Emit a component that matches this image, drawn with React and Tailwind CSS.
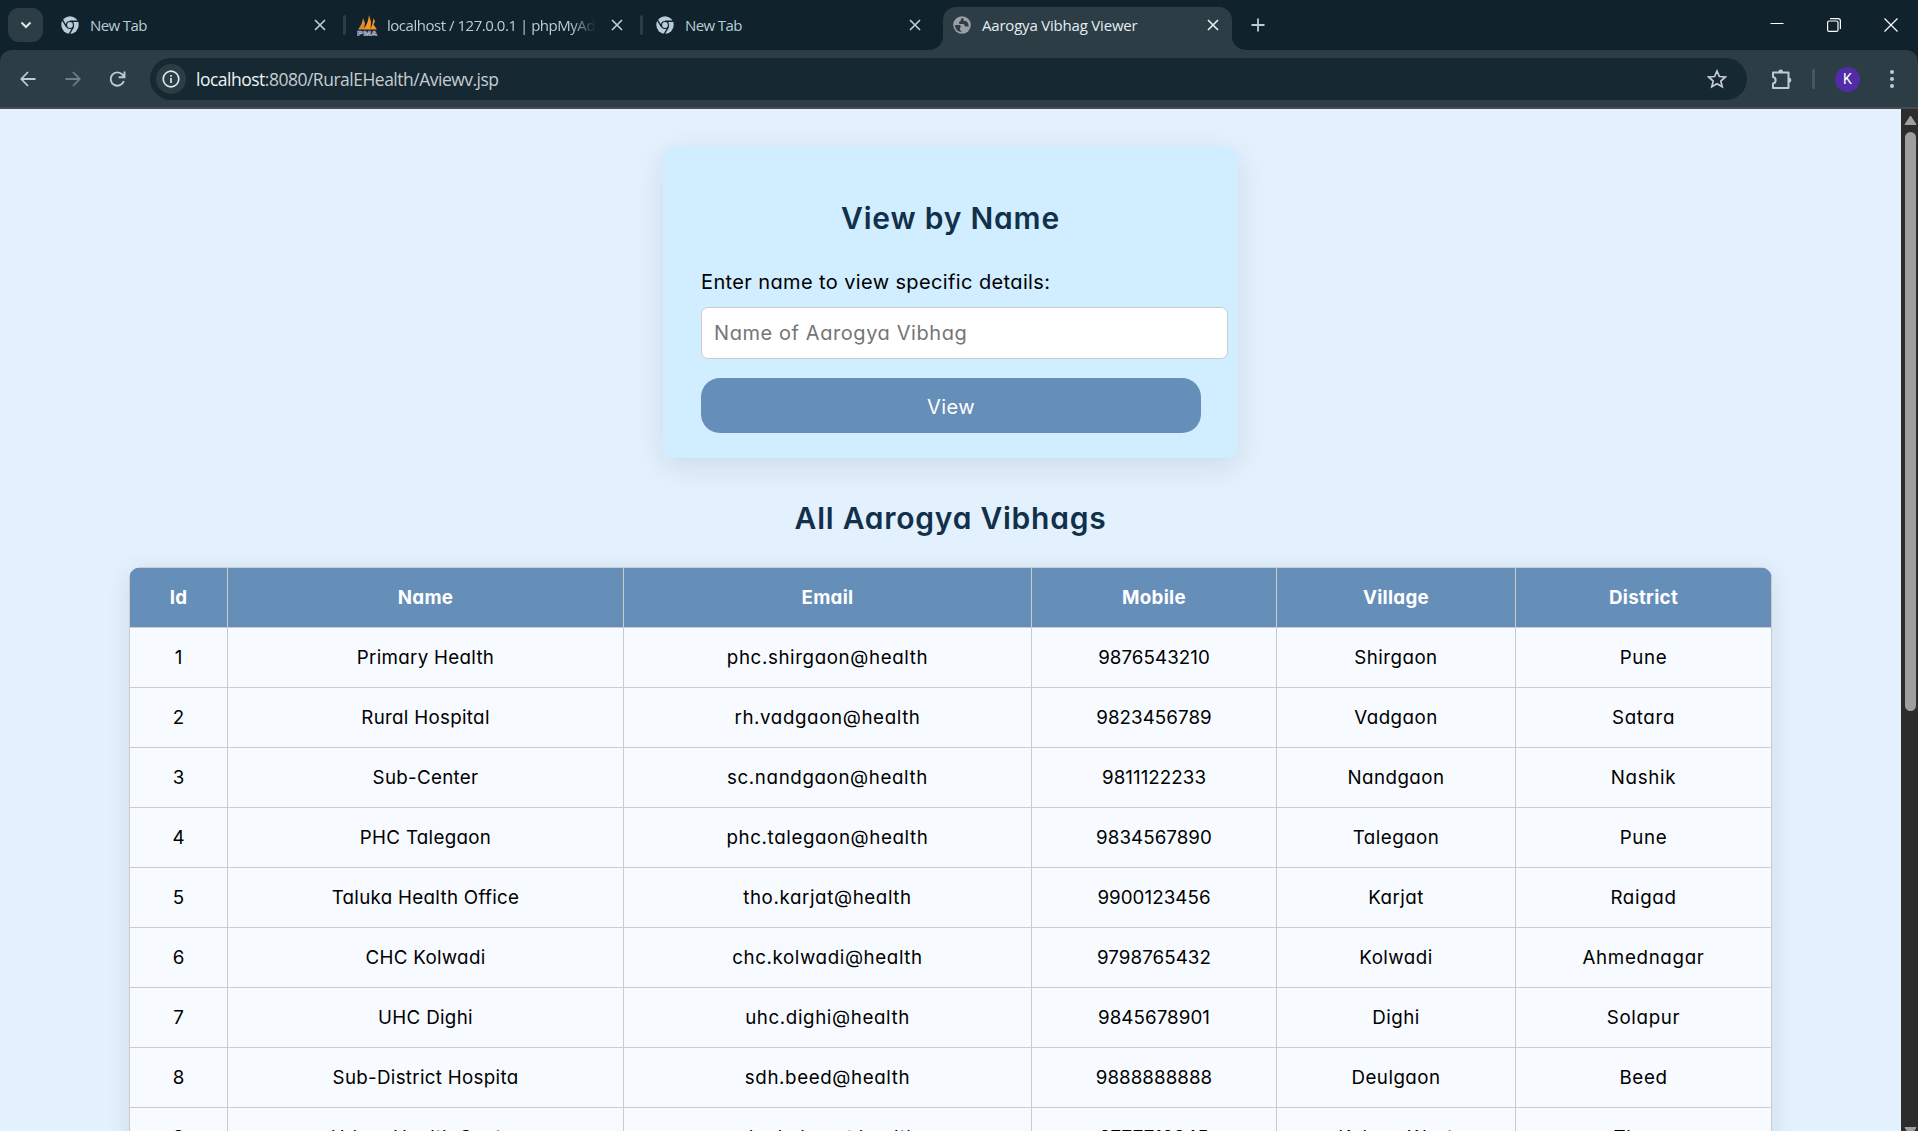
const POP = "font-['Inter','Liberation_Sans',sans-serif] [font-feature-settings:'cv11']";
const SEG = "font-['Open_Sans','Noto_Sans',sans-serif]";

const rows = [
  ["1", "Primary Health", "phc.shirgaon@health", "9876543210", "Shirgaon", "Pune"],
  ["2", "Rural Hospital", "rh.vadgaon@health", "9823456789", "Vadgaon", "Satara"],
  ["3", "Sub-Center", "sc.nandgaon@health", "9811122233", "Nandgaon", "Nashik"],
  ["4", "PHC Talegaon", "phc.talegaon@health", "9834567890", "Talegaon", "Pune"],
  ["5", "Taluka Health Office", "tho.karjat@health", "9900123456", "Karjat", "Raigad"],
  ["6", "CHC Kolwadi", "chc.kolwadi@health", "9798765432", "Kolwadi", "Ahmednagar"],
  ["7", "UHC Dighi", "uhc.dighi@health", "9845678901", "Dighi", "Solapur"],
  ["8", "Sub-District Hospita", "sdh.beed@health", "9888888888", "Deulgaon", "Beed"],
  ["9", "Urban Health Center", "uhc.kalyan@health", "9777712345", "Kalyan West", "Thane"],
];
const heads = ["Id", "Name", "Email", "Mobile", "Village", "District"];
const tracking = [
  "tracking-normal",
  "tracking-[0.3px]",
  "tracking-[0.6px]",
  "tracking-[0.05px]",
  "tracking-[0.45px]",
  "tracking-[0.65px]",
];

function ChromeIcon() {
  return (
    <svg width="18" height="18" viewBox="0 0 18 18" className="shrink-0">
      <circle cx="9" cy="9" r="8.7" fill="#b7cdd8" />
      <g stroke="#10222b" strokeWidth="1.4" fill="none">
        <circle cx="9" cy="9" r="4.1" fill="#10222b" stroke="none" />
        <path d="M9 5.2H17.2M5.6 10.8L1.4 3.8M12.4 10.8L8.3 18" />
      </g>
      <circle cx="9" cy="9" r="2.9" fill="#b7cdd8" />
    </svg>
  );
}

function PmaIcon() {
  return (
    <svg width="21" height="21" viewBox="0 0 21 21" className="shrink-0">
      <path d="M1 14.500C4 11 5.500 7 6 3L8 8L7 14.500Z" fill="#d98a35" />
      <path d="M6.500 14.500C10 10 11.500 5 12 0L14 7L13.500 14.500Z" fill="#f8981d" />
      <path d="M13 14.500C15 11 16 7 16.500 3L18 6.500L16.500 9.500L20 14.500Z" fill="#ec9430" />
      <text x="0" y="20.500" fontSize="8" fontWeight="700" textLength="20.500" lengthAdjust="spacingAndGlyphs" fill="#3a3a66" stroke="#b9bdd6" strokeWidth=".6" fontFamily="Liberation Sans">PMA</text>
    </svg>
  );
}

function GlobeIcon() {
  return (
    <svg width="18" height="18" viewBox="0 0 18 18" className="shrink-0">
      <circle cx="9" cy="9" r="8.8" fill="#9aa0a6" />
      <path d="M9.500 2C7.500 2.500 8.500 4.500 7 5.500C5 6 6 8 7.500 8H10C12 8 11 10 12.500 10.500H15.800C15.500 6 13 4.500 11.500 5C10 5 11.500 3 9.500 2ZM2 9H5.500C8 9 8.500 11 7 12C6.500 13 7.500 15 9 16C4.500 16 2 13 2 9Z" fill="#2c3d46" />
    </svg>
  );
}

function Cross({ color }) {
  return (
    <svg width="12" height="12" viewBox="0 0 12 12" className="shrink-0" stroke={color} strokeWidth="1.700" fill="none">
      <path d="M1 1L11 11M11 1L1 11" />
    </svg>
  );
}

function TabStrip() {
  return (
    <div className={`flex h-[50px] bg-[#10222b] text-[15px] text-[#b7cdd8] ${SEG}`}>
      <div className="mt-2 ml-2 flex h-[34px] w-[35px] shrink-0 items-center justify-center rounded-[11px] bg-[#2c3d46]">
        <svg width="12" height="8" viewBox="0 0 12 8" fill="none" stroke="#dfe9ee" strokeWidth="2"><path d="M1.500 1.500L6 6L10.500 1.500" /></svg>
      </div>
      <div className="flex h-[50px] w-[303px] shrink-0 items-center pl-[18px]">
        <ChromeIcon />
        <span className="ml-[11px] flex-1 whitespace-nowrap tracking-[-0.6px]">New Tab</span>
        <Cross color="#b7cdd8" />
        <span className="ml-[17px] h-5 w-[3px] rounded bg-[#2c3d46]" />
      </div>
      <div className="flex h-[50px] w-[297px] shrink-0 items-center pl-[11px]">
        <PmaIcon />
        <span className="ml-[9px] w-[209px] overflow-hidden whitespace-nowrap tracking-[-0.47px] [mask-image:linear-gradient(to_right,black_88%,transparent)]">localhost / 127.0.0.1 | phpMyAdmin</span>
        <span className="flex-1" />
        <Cross color="#b7cdd8" />
        <span className="ml-[17px] h-5 w-[3px] rounded bg-[#2c3d46]" />
      </div>
      <div className="flex h-[50px] w-[285px] shrink-0 items-center pl-[13px]">
        <ChromeIcon />
        <span className="ml-[11px] flex-1 whitespace-nowrap tracking-[-0.6px]">New Tab</span>
        <Cross color="#b7cdd8" />
        <span className="w-[7px]" />
      </div>
      <svg width="15" height="50" viewBox="0 0 15 50" className="shrink-0"><path d="M0 50C9 50 15 44 15 36V50Z" fill="#2c3d46" /></svg>
      <div className="mt-[7px] flex h-[43px] w-[289px] shrink-0 items-center rounded-t-[13px] bg-[#2c3d46] pr-[13px] pb-[7px] pl-[10px] text-[#e4edf1]">
        <GlobeIcon />
        <span className="ml-[11px] flex-1 whitespace-nowrap tracking-[-0.2px]">Aarogya Vibhag Viewer</span>
        <Cross color="#e4edf1" />
      </div>
      <svg width="15" height="50" viewBox="0 0 15 50" className="shrink-0"><path d="M15 50C6 50 0 44 0 36V50Z" fill="#2c3d46" /></svg>
      <div className="flex h-[50px] flex-1 items-center pl-1">
        <svg width="14" height="14" viewBox="0 0 14 14" stroke="#b7cdd8" strokeWidth="1.800"><path d="M7 .5V13.500M.5 7H13.500" /></svg>
      </div>
      <div className="flex h-[49px] items-center gap-[43px] pr-5">
        <svg width="14" height="14" viewBox="0 0 14 14" stroke="#fff" className="-mt-[3px]"><path d="M.5 7.500H13.500" /></svg>
        <svg width="14" height="14" viewBox="0 0 14 14" stroke="#fff" fill="none" strokeWidth="1.200"><rect x=".6" y="3" width="10.400" height="10.400" rx="1.500" /><path d="M3 .7H11Q13.400 .7 13.400 3V11" /></svg>
        <svg width="14" height="14" viewBox="0 0 14 14" stroke="#fff" strokeWidth="1.200"><path d="M.5 .5L13.500 13.500M13.500 .5L.5 13.500" /></svg>
      </div>
    </div>
  );
}

function Toolbar() {
  return (
    <div className="bg-[#10222b]">
      <div className={`flex h-[59px] items-start rounded-t-[12px] border-b-2 border-[#4b484d] bg-[#2c3d46] pt-2 ${SEG}`}>
        <div className="flex h-[42px] w-[150px] shrink-0 items-center pl-5">
          <svg width="16" height="16" viewBox="0 0 16 16" fill="none" stroke="#b7cdd8" strokeWidth="1.800"><path d="M15.500 8H1.500M8 1L1.300 8L8 15" /></svg>
          <svg width="16" height="16" viewBox="0 0 16 16" fill="none" stroke="#6d7f89" strokeWidth="1.800" className="ml-[29px]"><path d="M.5 8H14.500M8 1L14.700 8L8 15" /></svg>
          <svg width="17" height="17" viewBox="0 0 17 17" fill="none" stroke="#b7cdd8" strokeWidth="1.900" className="ml-[28px]"><path d="M14.800 10A6.700 6.700 0 1 1 13.500 3.700L15.500 5.800M15.500 .5V6.300H9.700" /></svg>
        </div>
        <div className="flex h-[42px] w-[1597px] shrink-0 items-center rounded-full bg-[#162831] pl-[6px]">
          <div className="flex h-[30px] w-[30px] items-center justify-center rounded-full bg-[#2c3d46]">
            <svg width="18" height="18" viewBox="0 0 18 18" fill="none" stroke="#e0e8ec" strokeWidth="1.700"><circle cx="9" cy="9" r="7.800" /><path d="M9 8V13M9 5V6.700" /></svg>
          </div>
          <span className="ml-[10px] flex-1 pt-px text-[17.5px] tracking-[-0.5px] text-[#c5cdd1]"><span className="text-[#eef3f5]">localhost</span>:8080/RuralEHealth/Aviewv.jsp</span>
          <svg width="20" height="20" viewBox="0 0 20 20" fill="none" stroke="#c5cbd2" strokeWidth="1.700" className="mr-5"><path d="M10 2L12.400 7.500L18.300 8L13.800 12L15.200 17.800L10 14.700L4.800 17.800L6.200 12L1.700 8L7.600 7.500Z" /></svg>
        </div>
        <div className="flex h-[42px] flex-1 items-center pl-6">
          <svg width="21" height="21" viewBox="0 0 21 21" fill="none" stroke="#b7cdd8" strokeWidth="2"><path d="M2 3.500H17.500V19H2V14.500C5.500 14 5.500 8.500 2 8Z" strokeLinejoin="round" /><path d="M7.300 3A2.400 2.400 0 0 1 12.100 3ZM18 8.800A2.400 2.400 0 0 1 18 13.600Z" fill="#b7cdd8" stroke="none" /></svg>
          <span className="ml-[20px] h-5 w-[3px] rounded bg-[#455761]" />
          <span className="ml-[20px] flex h-[25px] w-[25px] items-center justify-center rounded-full bg-[#522ca8] font-['Roboto',sans-serif] text-[14px] text-white">K</span>
          <svg width="4" height="18" viewBox="0 0 4 18" fill="#b7cdd8" className="ml-[30px]"><circle cx="2" cy="2" r="2" /><circle cx="2" cy="9" r="2" /><circle cx="2" cy="16" r="2" /></svg>
        </div>
      </div>
    </div>
  );
}

function Scrollbar() {
  return (
    <div className="flex w-[17px] shrink-0 flex-col items-center bg-[#2c2c2c] pt-1.5">
      <svg width="13" height="11" viewBox="0 0 13 11" className="ml-px"><path d="M6.500 1L12 9.500H1Z" fill="#9f9f9f" stroke="#9f9f9f" strokeLinejoin="round" /></svg>
      <div className="mt-[6px] ml-px h-[579px] w-[11px] rounded-full bg-[#9f9f9f]" />
      <svg width="13" height="11" viewBox="0 0 13 11" className="mt-auto -mb-[6px] ml-px shrink-0"><path d="M6.500 10L12 1.500H1Z" fill="#9f9f9f" stroke="#9f9f9f" strokeLinejoin="round" /></svg>
    </div>
  );
}

export default function App() {
  return (
    <div className="flex h-[1131px] w-[1918px] flex-col overflow-hidden bg-[#e3f1ff]">
      <TabStrip />
      <Toolbar />
      <div className="flex min-h-0 flex-1">
        <main className={`flex min-w-0 flex-1 flex-col items-center overflow-hidden text-black ${POP}`}>
          <section className="mt-[38px] flex h-[311px] w-[575px] shrink-0 flex-col rounded-[12px] bg-[#d0eeff] px-[38px] shadow-[0_8px_30px_rgba(0,0,0,0.1)]">
            <h2 className="mt-[49px] text-center text-[30px] leading-[45px] font-semibold tracking-[0.8px] text-[#12304a]">View by Name</h2>
            <label className="mt-[26px] text-[20px] leading-[30px] tracking-[0.38px]">Enter name to view specific details:</label>
            <input className="mt-[10px] h-[52px] w-[527px] shrink-0 rounded-[7px] border border-[#ccc] bg-white px-3 text-[20px] tracking-[0.58px] placeholder:text-[#757575]" placeholder="Name of Aarogya Vibhag" />
            <button className="mt-[19px] h-[55px] w-[500px] shrink-0 rounded-[19px] bg-[#658eb9] pt-[3px] text-[20px] tracking-[0.4px] text-white">View</button>
          </section>
          <h2 className="mt-[38px] shrink-0 text-[30px] leading-[45px] font-semibold tracking-[0.75px] text-[#12304a]">All Aarogya Vibhags</h2>
          <div className="mt-[26px] w-[1643px] shrink-0 overflow-hidden rounded-[12px] bg-[#f7fbff] shadow-[0_5px_25px_rgba(0,0,0,0.1)]">
            <table className="w-full table-fixed border-collapse text-center text-[18.75px]">
              <colgroup>
                <col className="w-[98px]" /><col className="w-[396px]" /><col className="w-[408px]" /><col className="w-[245px]" /><col className="w-[239px]" /><col className="w-[256px]" />
              </colgroup>
              <thead>
                <tr className="h-[60px] bg-[#658eb9] text-white">
                  {heads.map((h) => <th key={h} className="border border-[#ccc] p-0 pt-[2px] font-bold tracking-[0.3px]">{h}</th>)}
                </tr>
              </thead>
              <tbody>
                {rows.map((r) => (
                  <tr key={r[0]} className="h-[60px]">
                    {r.map((c, i) => <td key={i} className={`border border-[#ccc] p-0 pt-px ${tracking[i]}`}>{c}</td>)}
                  </tr>
                ))}
              </tbody>
            </table>
          </div>
        </main>
        <Scrollbar />
      </div>
    </div>
  );
}
